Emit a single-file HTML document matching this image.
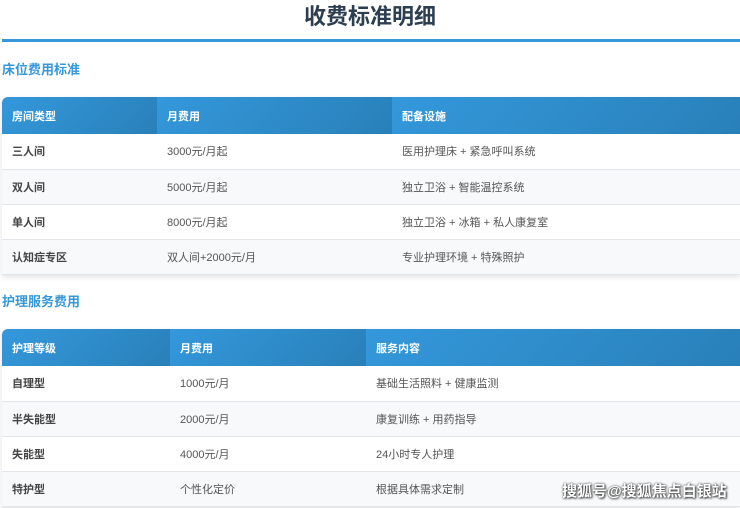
<!DOCTYPE html>
<html><head><meta charset="utf-8"><style>
*{margin:0;padding:0;box-sizing:border-box}
body{width:740px;height:508px;overflow:hidden;background:#fff;font-family:"Liberation Sans","Noto Sans CJK SC",sans-serif;position:relative}
h1{position:absolute;left:0;width:740px;top:3px;text-align:center;font-size:22px;font-weight:bold;color:#2c3e50;line-height:28px}
.line{position:absolute;left:2px;right:0;top:39px;height:3px;background:#3498db}
h2{position:absolute;left:2px;font-size:13px;font-weight:bold;color:#3498db;line-height:16px}
table{position:absolute;left:2px;width:738px;border-collapse:collapse;font-size:11px;box-shadow:0 2px 6px rgba(0,0,0,.12);border-radius:6px 0 0 0;overflow:hidden}
th{background:linear-gradient(135deg,#3498db,#2980b9);color:#fff;text-align:left;font-weight:bold;height:37px;padding-left:10px}
td{height:35px;padding-left:10px;color:#555;border-bottom:1px solid #e3e6ea}
td:first-child{font-weight:bold;color:#444}
tr:nth-child(odd) td{background:#f7f9fa}
.wm{position:absolute;left:562px;top:480px;font-size:15px;font-weight:bold;color:#fff;text-shadow:0 0 2px #333,1px 1px 2px #333}
</style></head><body>
<h1>收费标准明细</h1>
<div class="line"></div>
<h2 style="top:62px">床位费用标准</h2>
<table style="top:97px">
<tr><th style="width:155px">房间类型</th><th style="width:235px">月费用</th><th>配备设施</th></tr>
<tr><td>三人间</td><td>3000元/月起</td><td>医用护理床 + 紧急呼叫系统</td></tr>
<tr><td>双人间</td><td>5000元/月起</td><td>独立卫浴 + 智能温控系统</td></tr>
<tr><td>单人间</td><td>8000元/月起</td><td>独立卫浴 + 冰箱 + 私人康复室</td></tr>
<tr><td>认知症专区</td><td>双人间+2000元/月</td><td>专业护理环境 + 特殊照护</td></tr>
</table>
<h2 style="top:294px">护理服务费用</h2>
<table style="top:329px">
<tr><th style="width:168px">护理等级</th><th style="width:196px">月费用</th><th>服务内容</th></tr>
<tr><td>自理型</td><td>1000元/月</td><td>基础生活照料 + 健康监测</td></tr>
<tr><td>半失能型</td><td>2000元/月</td><td>康复训练 + 用药指导</td></tr>
<tr><td>失能型</td><td>4000元/月</td><td>24小时专人护理</td></tr>
<tr><td>特护型</td><td>个性化定价</td><td>根据具体需求定制</td></tr>
</table>
<div class="wm">搜狐号@搜狐焦点白银站</div>
</body></html>
